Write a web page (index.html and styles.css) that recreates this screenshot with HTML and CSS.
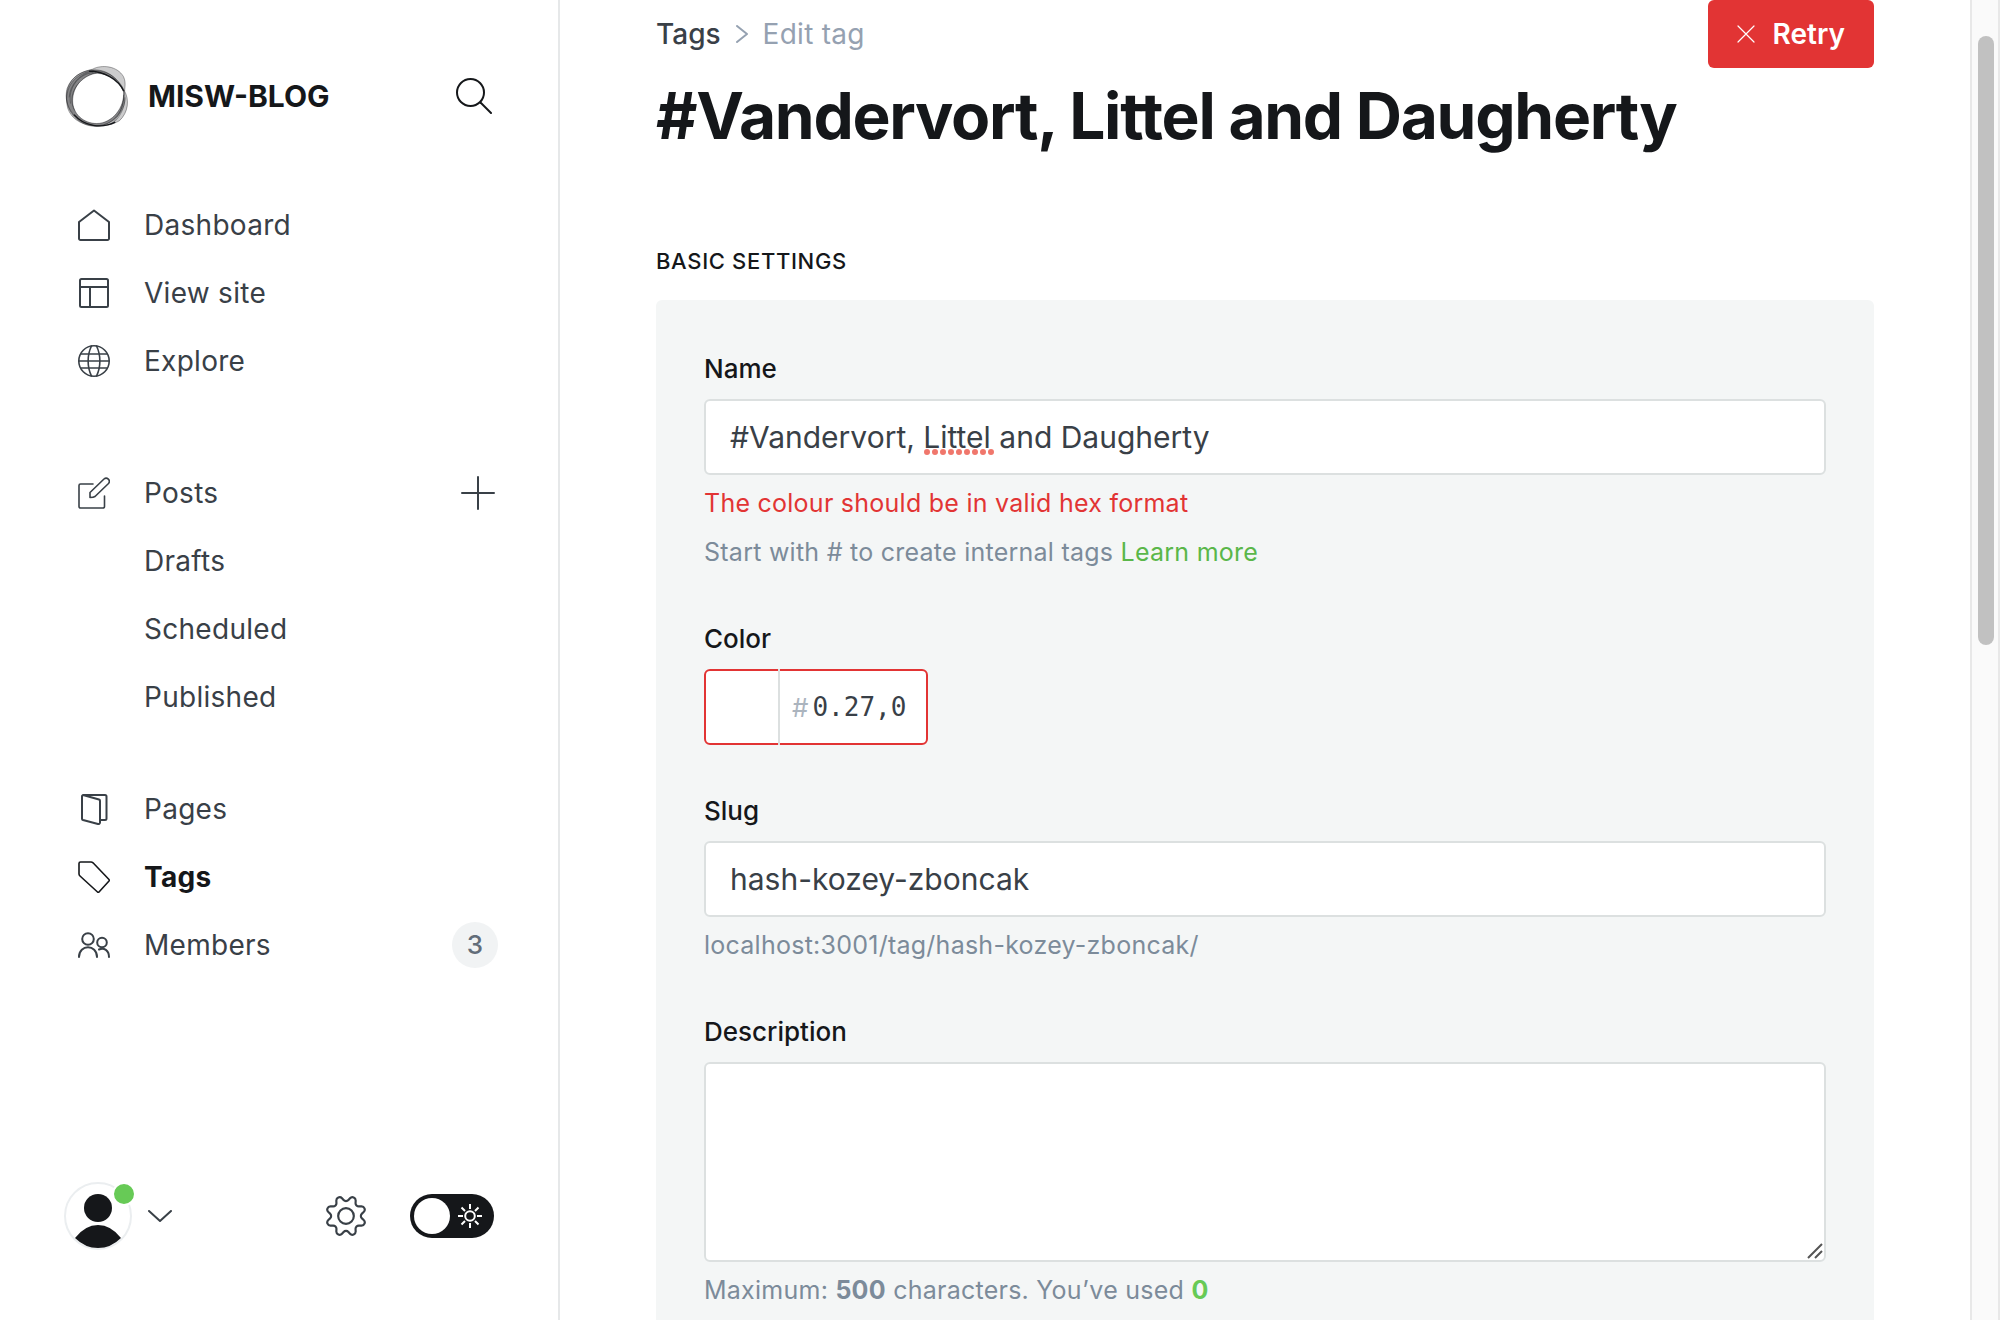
FILE: index.html
```html
<!DOCTYPE html>
<html lang="en">
<head>
<meta charset="utf-8">
<title>Edit tag - MISW-BLOG</title>
<link rel="stylesheet" href="styles.css">
</head>
<body>
<div class="app">
  <aside class="sidebar">
    <header class="site">
      <svg class="site-logo" viewBox="-5 -5 186 186" aria-hidden="true">
        <g fill="#15171a" fill-opacity=".22" stroke="#15171a" stroke-opacity=".7" stroke-width="1.500">
          <path d="M2 88C4 42 40 12 84 12c44 0 80 34 84 78 2 46-36 86-82 86C40 176 0 134 2 88Z"/>
          <path d="M4 66C18 28 48 18 78 10 104-4 150 0 168 32c10 22 0 36 4 58 4 34-30 86-84 84C34 174-10 118 4 66Z"/>
          <path d="M6 124C-6 76 14 28 76 14c40-2 76 18 94 58 16 26 12 64-14 88-46 26-130 22-150-36Z"/>
        </g>
        <path fill="#fff" stroke="#15171a" stroke-opacity=".6" stroke-width="2" d="M20 102C20 60 52 24 92 22c36 2 66 22 76 54 4 44-32 92-78 92-38 0-70-28-70-66Z"/>
        <g fill="none" stroke="#15171a" stroke-width="2">
          <path stroke-opacity=".5" d="M14 110C6 66 36 24 80 20M10 92C12 56 40 22 82 15M26 130C2 86 34 36 88 20M168 84c2 34-14 66-36 84M172 92c0 30-14 58-36 76"/>
          <path stroke-width="4" d="M68 16c42 0 84 22 101 58M24 142c30 34 80 42 120 22"/>
        </g>
      </svg>
      <strong class="site-name">MISW-BLOG</strong>
      <button class="icon-button search" type="button" aria-label="Search">
        <svg width="36" height="36" viewBox="0 0 36 36" fill="none" stroke="#15171a" stroke-width="2" stroke-linecap="round"><circle cx="14.500" cy="14.500" r="13.500"/><path d="M24.500 24.500 35 35"/></svg>
      </button>
    </header>

    <nav class="nav" aria-label="Main">
      <ul class="nav-group">
        <li><a class="nav-link" href="#dashboard">
          <svg class="nav-icon" viewBox="0 0 32 32"><path d="M1 13 16 1.500 31 13v16.500a1.500 1.500 0 0 1-1.500 1.500h-27A1.500 1.500 0 0 1 1 29.500Z"/></svg>Dashboard</a></li>
        <li><a class="nav-link" href="#site">
          <svg class="nav-icon" viewBox="0 0 32 32"><rect x="2" y="2" width="28" height="28" rx="1.500"/><path d="M2 10h28M12 10v20"/></svg>View site</a></li>
        <li><a class="nav-link" href="#explore">
          <svg class="nav-icon thin" viewBox="0 0 32 32"><circle cx="16" cy="16" r="15.200"/><path d="M13.500 1C9 10 9 22 13.500 31M18.500 1C23 10 23 22 18.500 31M3 9h26M1 16h30M3 23h26"/></svg>Explore</a></li>
      </ul>
      <ul class="nav-group">
        <li class="nav-row"><a class="nav-link" href="#posts">
          <svg class="nav-icon thin" viewBox="0 0 32 32"><path d="M15 7H2.500A1.500 1.500 0 0 0 1 8.500v21A1.500 1.500 0 0 0 2.500 31h22.500a1.500 1.500 0 0 0 1.500-1.500V19M12 20.500v-5L26 2c3-2.500 7 1.500 4.500 4.500L17 19.500c-1.500 1-3 1-5 1Z"/></svg>Posts</a>
          <button class="icon-button add" type="button" aria-label="New post">
            <svg width="34" height="34" viewBox="0 0 34 34" fill="none" stroke="#394047" stroke-width="2" stroke-linecap="round"><path d="M17 1v32M1 17h32"/></svg>
          </button></li>
        <li><a class="nav-link sub" href="#drafts">Drafts</a></li>
        <li><a class="nav-link sub" href="#scheduled">Scheduled</a></li>
        <li><a class="nav-link sub" href="#published">Published</a></li>
      </ul>
      <ul class="nav-group last">
        <li><a class="nav-link" href="#pages">
          <svg class="nav-icon" viewBox="0 0 32 32"><path d="M23 27h4a1.500 1.500 0 0 0 1.500-1.500v-22A1.500 1.500 0 0 0 27 2H5.500A1.500 1.500 0 0 0 4 3.500v22A1.500 1.500 0 0 0 5 27l15 4a1.500 1.500 0 0 0 2-1.500V8a1.500 1.500 0 0 0-1-1.500L5 2"/></svg>Pages</a></li>
        <li><a class="nav-link active" href="#tags" aria-current="page">
          <svg class="nav-icon thin" viewBox="0 0 32 32"><path d="M1 2.500A1.500 1.500 0 0 1 2.500 1H13a3 3 0 0 1 2 .8L31 18.500a1 1 0 0 1 0 1.500L21 31a1 1 0 0 1-1.500 0L2 15a3 3 0 0 1-1-2Z"/></svg>Tags</a></li>
        <li class="nav-row"><a class="nav-link" href="#members">
          <svg class="nav-icon" viewBox="0 0 32 32"><circle cx="10" cy="10" r="5.800"/><path d="M1 28c0-13 18-13 18 0"/><circle cx="24" cy="13.500" r="4.800"/><path d="M21 20.500c5-2.500 10 1 10 7.500"/></svg>Members</a>
          <span class="badge">3</span></li>
      </ul>
    </nav>

    <footer class="sidebar-foot">
      <button class="icon-button account" type="button" aria-label="Account menu">
        <span class="avatar">
          <svg width="68" height="68" viewBox="0 0 68 68" aria-hidden="true"><circle cx="34" cy="34" r="33" fill="#fff" stroke="#ebeef0" stroke-width="2"/><circle cx="34" cy="26" r="14" fill="#15171a"/><path fill="#15171a" d="M11 56Q21 43 34 43T57 56Q47 66 34 66T11 56Z"/></svg>
          <span class="status"></span>
        </span>
        <svg width="24" height="12" viewBox="0 0 24 12" fill="none" stroke="#394047" stroke-width="2" stroke-linecap="round" stroke-linejoin="round"><path d="m1 1 11 10L23 1"/></svg>
      </button>
      <button class="icon-button settings" type="button" aria-label="Settings">
        <svg width="40" height="40" viewBox="0 0 24 24" fill="none" stroke="#394047" stroke-width="1.300"><circle cx="12" cy="12" r="4.700"/><path d="M10.546 2.438a1.957 1.957 0 0 0 2.908 0L14.400 1.400a1.959 1.959 0 0 1 3.410 1.413l-.071 1.400A1.958 1.958 0 0 0 19.790 6.271l1.400-.071A1.959 1.959 0 0 1 22.600 9.606l-1.038.940a1.958 1.958 0 0 0 0 2.908l1.039.945a1.959 1.959 0 0 1-1.413 3.410l-1.400-.071a1.958 1.958 0 0 0-2.056 2.056l.071 1.400A1.959 1.959 0 0 1 14.400 22.600l-.941-1.039a1.957 1.957 0 0 0-2.908 0L9.606 22.600A1.959 1.959 0 0 1 6.200 21.192l.072-1.400a1.958 1.958 0 0 0-2.056-2.056l-1.400.071A1.958 1.958 0 0 1 1.400 14.400l1.041-.945a1.958 1.958 0 0 0 0-2.908L1.400 9.606A1.958 1.958 0 0 1 2.808 6.200l1.400.071A1.958 1.958 0 0 0 6.264 4.211L6.200 2.812A1.959 1.959 0 0 1 9.606 1.400Z"/></svg>
      </button>
      <label class="theme">
        <input class="theme-input" type="checkbox" aria-label="Dark mode">
        <svg class="theme-sun" width="24" height="24" viewBox="0 0 24 24" fill="none" stroke="#fff" stroke-width="2" aria-hidden="true"><circle cx="12" cy="12" r="4.800"/><path d="M12 0v5M12 19v5M0 12h5M19 12h5M3.500 3.500l3.500 3.500M17 17l3.500 3.500M3.500 20.500l3.500-3.500M17 7l3.500-3.500"/></svg>
      </label>
    </footer>
  </aside>

  <main class="main">
    <div class="topbar">
      <nav class="crumbs" aria-label="Breadcrumb">
        <a class="crumb" href="#tags">Tags</a>
        <svg width="12" height="18" viewBox="0 0 12 18" fill="none" stroke="#95a1b1" stroke-width="2" stroke-linecap="round" stroke-linejoin="round"><path d="m1 1 10 8L1 17"/></svg>
        <span class="crumb-current">Edit tag</span>
      </nav>
      <button class="retry" type="button">
        <svg width="18" height="18" viewBox="0 0 18 18" fill="none" stroke="#fff" stroke-width="1.200" stroke-linecap="round"><path d="m1 1 16 16M17 1 1 17"/></svg>
        Retry
      </button>
    </div>
    <h1 class="title">#Vandervort, Littel and Daugherty</h1>
    <h2 class="section-title">Basic settings</h2>
    <form class="panel">
      <div class="field">
        <label class="label" for="name">Name</label>
        <div class="input-wrap">
          <input class="input" id="name" type="text" value="#Vandervort, Littel and Daugherty" spellcheck="false">
          <svg class="misspelled" width="70" height="6" viewBox="0 0 70 6" aria-hidden="true"><path d="M3 3h65" stroke="#f0776c" stroke-width="6" stroke-linecap="round" stroke-dasharray="0 8"/></svg>
        </div>
        <p class="hint error">The colour should be in valid hex format</p>
        <p class="hint second">Start with # to create internal tags <a class="learn" href="#internal-tags">Learn more</a></p>
      </div>
      <div class="field short">
        <label class="label" for="color">Color</label>
        <div class="color-box">
          <button class="swatch" type="button" aria-label="Pick a color"></button>
          <span class="hash">#</span>
          <input class="color-input" id="color" type="text" value="0.27,0" spellcheck="false">
        </div>
      </div>
      <div class="field">
        <label class="label" for="slug">Slug</label>
        <input class="input" id="slug" type="text" value="hash-kozey-zboncak" spellcheck="false">
        <p class="hint">localhost:3001/tag/hash-kozey-zboncak/</p>
      </div>
      <div class="field">
        <label class="label" for="description">Description</label>
        <div class="input-wrap">
          <textarea class="input area" id="description"></textarea>
          <svg class="grip" width="16" height="16" viewBox="0 0 16 16" fill="none" stroke="#555" stroke-width="2" aria-hidden="true"><path d="M1 15 15 1M8 15l7-7"/></svg>
        </div>
        <p class="hint">Maximum: <b>500</b> characters. You’ve used <b class="count">0</b></p>
      </div>
    </form>
  </main>
  <div class="scroll-track" aria-hidden="true"><div class="scroll-thumb"></div></div>
</div>
</body>
</html>
```
FILE: styles.css
```css
* { box-sizing: border-box; }

body {
  margin: 0;
  font-family: Inter, "Liberation Sans", sans-serif;
  font-size: 28px;
  color: #394047;
  background: #fff;
}

h1, h2, p, ul { margin: 0; padding: 0; }
ul { list-style: none; }
a { color: inherit; text-decoration: none; }
svg { display: block; flex: none; }
button, input, textarea { font: inherit; color: inherit; }

.app { display: flex; height: 100vh; overflow: hidden; }

.icon-button { padding: 0; border: 0; background: none; cursor: pointer; }

/* Sidebar */
.sidebar {
  display: flex;
  flex-direction: column;
  flex: none;
  width: 560px;
  padding: 64px 60px 70px 64px;
  border-right: 2px solid #e6e8e9;
}

.site { display: flex; align-items: center; height: 64px; margin-bottom: 63px; }
.site-logo { width: 64px; height: 64px; }
.site-name { flex: 1; margin-left: 20px; font-size: 30px; font-weight: 700; color: #15171a; }
.search { margin-right: 6px; }

.nav { flex: 1; padding-left: 14px; }
.nav-group { margin-bottom: 64px; }
.nav-group:nth-child(2) { margin-bottom: 44px; }
.nav-row { display: flex; align-items: center; justify-content: space-between; }
.nav-link { display: flex; align-items: center; gap: 34px; height: 68px; letter-spacing: 0.01em; }
.nav-link.sub { padding-left: 66px; }
.nav-link.active { font-weight: 700; color: #15171a; }
.nav-icon { width: 32px; height: 32px; fill: none; stroke: currentColor; stroke-width: 2; stroke-linejoin: round; stroke-linecap: round; }
.nav-icon.thin { stroke-width: 1.6; }
.add { margin-right: 3px; }
.badge {
  width: 46px;
  height: 46px;
  border-radius: 50%;
  background: #f1f3f4;
  color: #626d79;
  font-size: 26px;
  font-weight: 500;
  line-height: 46px;
  text-align: center;
}

.sidebar-foot { display: flex; align-items: center; height: 68px; }
.account { display: flex; align-items: center; gap: 16px; }
.avatar { position: relative; }
.status {
  position: absolute;
  top: 0;
  right: -4px;
  width: 24px;
  height: 24px;
  border: 2px solid #fff;
  border-radius: 50%;
  background: #67ca56;
}
.settings { margin: 0 44px 0 auto; }
.theme { position: relative; display: flex; margin-right: 4px; }
.theme-input {
  appearance: none;
  width: 84px;
  height: 44px;
  margin: 0;
  padding: 4px;
  border-radius: 22px;
  background: #15171a;
}
.theme-input::before { content: ""; display: block; width: 36px; height: 36px; border-radius: 50%; background: #fff; }
.theme-sun { position: absolute; top: 10px; right: 12px; }

/* Main column */
.main { flex: 1; min-width: 0; padding: 0 96px; }
.topbar { display: flex; align-items: center; justify-content: space-between; height: 68px; margin-bottom: 8px; }
.crumbs { display: flex; align-items: center; gap: 15px; }
.crumb { font-weight: 500; }
.crumb-current { color: #95a1b1; letter-spacing: 0.01em; }
.retry {
  display: flex;
  align-items: center;
  gap: 18px;
  height: 68px;
  padding: 0 29px;
  border: 0;
  border-radius: 6px;
  background: #e23434;
  color: #fff;
  font-weight: 600;
}
.title { font-size: 64px; font-weight: 700; line-height: 80px; color: #15171a; letter-spacing: -0.02em; }
.section-title {
  margin: 89px 0 23px;
  font-size: 22px;
  font-weight: 500;
  line-height: 32px;
  letter-spacing: 0.03em;
  text-transform: uppercase;
  color: #15171a;
}

/* Form */
.panel { padding: 49px 48px; border-radius: 6px; background: #f4f6f6; }
.field { margin-bottom: 49px; }
.field.short { margin-bottom: 46px; }
.label { display: block; margin-bottom: 10px; font-size: 26px; font-weight: 500; line-height: 40px; color: #15171a; }
.input-wrap { position: relative; }
.input {
  display: block;
  width: 100%;
  height: 76px;
  padding: 0 24px;
  border: 2px solid #dce0e0;
  border-radius: 6px;
  background: #fff;
  font-size: 30px;
  outline: 0;
}
.area { height: 200px; resize: none; }
.misspelled { position: absolute; top: 50px; left: 220px; }
.grip { position: absolute; right: 3px; bottom: 3px; }
.hint { margin-top: 10px; font-size: 25px; line-height: 36px; letter-spacing: 0.01em; color: #7c8b9a; }
.hint.second { margin-top: 13px; }
.hint.error { color: #e23434; }
.learn { color: #5ab74a; }
.count { color: #67ca56; }

.color-box {
  display: flex;
  align-items: center;
  width: 224px;
  height: 76px;
  border: 2px solid #e23434;
  border-radius: 6px;
  background: #fff;
}
.swatch { width: 74px; height: 76px; padding: 0; border: 0; border-right: 2px solid #dce0e0; background: none; }
.hash { margin: 0 4px 0 12px; font-size: 26px; color: #abb4be; }
.color-input {
  width: 104px;
  padding: 0;
  border: 0;
  outline: 0;
  background: none;
  font-family: "DejaVu Sans Mono", monospace;
  font-size: 26px;
}

.scroll-track {
  flex: none;
  width: 30px;
  padding: 36px 4px 0 6px;
  border: solid #e8e8e8;
  border-width: 0 2px;
  background: #fafafa;
}
.scroll-thumb { height: 609px; border-radius: 8px; background: #c1c1c1; }
```
